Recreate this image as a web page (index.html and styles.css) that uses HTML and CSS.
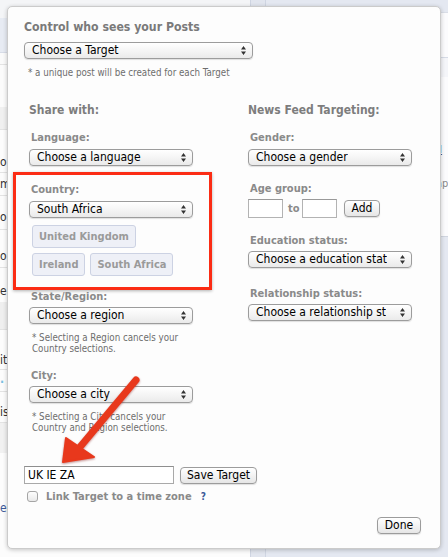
FILE: index.html
```html
<!DOCTYPE html>
<html>
<head>
<meta charset="utf-8">
<link rel="stylesheet" href="styles.css">
</head>
<body>
<div class="bg">
  <div class="bg-left">
    <div class="bgr r1"></div>
    <div class="bgr r2"></div>
    <div class="bgr r3"></div>
    <div class="bgr r4"></div>
    <div class="bgr r5"></div>
    <div class="bgr r6"><span>o</span></div>
    <div class="bgr r7"><span>m</span></div>
    <div class="bgr r8"><span>o</span></div>
    <div class="bgr r9"><span>o</span></div>
    <div class="bgr r10"><span>er</span></div>
    <div class="bgr r11"></div>
    <div class="bgr r12"><span>it</span></div>
    <div class="bgr r13"><span class="dot">·</span></div>
    <div class="bgr r14"><span>is</span></div>
    <div class="bgr r15"></div>
    <div class="bgr r16"><span class="lnk">e</span></div>
  </div>
  <div class="bg-gap"></div>
  <div class="bg-right">
    <div class="edge">
      <div class="edge-head"></div>
      <div class="edge-band"></div>
      <div class="edge-link">:l</div>
      <div class="edge-txt">ap</div>
    </div>
  </div>
</div>

<div class="modal">
  <h1 class="title">Control who sees your Posts</h1>
  <div class="select sel-target"><span>Choose a Target</span><svg class="arr" width="5" height="9" viewBox="0 0 5 9"><path d="M0 3.5L2.5 0L5 3.5Z M0 5.5L2.5 9L5 5.5Z" fill="#333"/></svg></div>
  <p class="note note-top">* a unique post will be created for each Target</p>

  <div class="cols">
    <div class="col col-left">
      <h2 class="head">Share with:</h2>
      <label class="lbl lbl-first">Language:</label>
      <div class="select"><span>Choose a language</span><svg class="arr" width="5" height="9" viewBox="0 0 5 9"><path d="M0 3.5L2.5 0L5 3.5Z M0 5.5L2.5 9L5 5.5Z" fill="#333"/></svg></div>

      <div class="redbox">
        <label class="lbl lbl-in">Country:</label>
        <div class="select"><span>South Africa</span><svg class="arr" width="5" height="9" viewBox="0 0 5 9"><path d="M0 3.5L2.5 0L5 3.5Z M0 5.5L2.5 9L5 5.5Z" fill="#333"/></svg></div>
        <div class="chips">
          <span class="chip">United Kingdom</span>
        </div>
        <div class="chips chips2">
          <span class="chip">Ireland</span>
          <span class="chip">South Africa</span>
        </div>
      </div>

      <label class="lbl lbl-state">State/Region:</label>
      <div class="select sel-tight"><span>Choose a region</span><svg class="arr" width="5" height="9" viewBox="0 0 5 9"><path d="M0 3.5L2.5 0L5 3.5Z M0 5.5L2.5 9L5 5.5Z" fill="#333"/></svg></div>
      <p class="note note-col">* Selecting a Region cancels your<br>Country selections.</p>

      <label class="lbl lbl-city">City:</label>
      <div class="select sel-tight"><span>Choose a city</span><svg class="arr" width="5" height="9" viewBox="0 0 5 9"><path d="M0 3.5L2.5 0L5 3.5Z M0 5.5L2.5 9L5 5.5Z" fill="#333"/></svg></div>
      <p class="note note-col">* Selecting a City cancels your<br>Country and Region selections.</p>
    </div>

    <div class="col col-right">
      <h2 class="head">News Feed Targeting:</h2>
      <label class="lbl lbl-first">Gender:</label>
      <div class="select"><span>Choose a gender</span><svg class="arr" width="5" height="9" viewBox="0 0 5 9"><path d="M0 3.5L2.5 0L5 3.5Z M0 5.5L2.5 9L5 5.5Z" fill="#333"/></svg></div>

      <label class="lbl lbl-r">Age group:</label>
      <div class="age">
        <span class="box"></span>
        <span class="to">to</span>
        <span class="box"></span>
        <span class="btn btn-add">Add</span>
      </div>

      <label class="lbl lbl-r">Education status:</label>
      <div class="select sel-tight"><span>Choose a education stat</span><svg class="arr" width="5" height="9" viewBox="0 0 5 9"><path d="M0 3.5L2.5 0L5 3.5Z M0 5.5L2.5 9L5 5.5Z" fill="#333"/></svg></div>

      <label class="lbl lbl-rel">Relationship status:</label>
      <div class="select sel-tight"><span>Choose a relationship st</span><svg class="arr" width="5" height="9" viewBox="0 0 5 9"><path d="M0 3.5L2.5 0L5 3.5Z M0 5.5L2.5 9L5 5.5Z" fill="#333"/></svg></div>
    </div>
  </div>

  <div class="save-row">
    <span class="text-input">UK IE ZA</span>
    <span class="btn btn-save">Save Target</span>
  </div>
  <div class="check-row">
    <span class="checkbox"></span>
    <span class="check-lbl">Link Target to a time zone</span>
    <span class="help">?</span>
  </div>
  <span class="btn btn-done">Done</span>
</div>

<svg class="arrow" width="448" height="557" viewBox="0 0 448 557">
  <g class="arrow-g">
    <line x1="136" y1="380" x2="80" y2="447" stroke="#e8381c" stroke-width="7" stroke-linecap="round"/>
    <polygon points="63,462 66,438 94,457" fill="#e8381c" stroke="#e8381c" stroke-width="2" stroke-linejoin="round"/>
  </g>
</svg>
</body>
</html>
```
FILE: styles.css
```css
* { box-sizing: border-box; }
html, body { margin: 0; padding: 0; }
body {
  width: 448px;
  height: 557px;
  overflow: hidden;
  position: relative;
  background: #e4e8f1;
  font-family: "DejaVu Sans Condensed", "DejaVu Sans", sans-serif;
}

/* ---------- faded background page ---------- */
.bg { display: flex; height: 557px; }
.bg-left {
  width: 251px;
  background: #f9f9f9;
  border-right: 1px solid #cfd5e2;
  display: flex;
  flex-direction: column;
}
.bgr {
  display: flex;
  align-items: flex-end;
  font-size: 12px;
  color: #333;
  border-bottom: 1px solid #e3e3e3;
}
.bgr span { line-height: 14px; }
.r1 { height: 18px; background: #f4f5f7; border-bottom: none; }
.r2 { height: 35px; background: #e7ebf3; border-bottom-color: #d7dce7; }
.r3 { height: 12px; background: #fafafa; }
.r4 { height: 42px; background: #fbfbfb; border-bottom: none; }
.r5 { height: 23px; background: #f0f0f0; }
.r6 { height: 43px; padding-bottom: 3px; background: #fcfcfc; }
.r7 { height: 23px; padding-bottom: 4px; background: #fcfcfc; }
.r8 { height: 34px; padding-bottom: 5px; background: #fcfcfc; }
.r9 { height: 38px; padding-bottom: 4px; background: #fcfcfc; }
.r10 { height: 34px; padding-bottom: 4px; background: #fcfcfc; border-bottom: none; }
.r11 { height: 28px; background: #efefef; }
.r12 { height: 40px; padding-bottom: 2px; background: #fcfcfc; }
.r13 { height: 22px; padding-bottom: 2px; background: #fcfcfc; color: #79c0e0; }
.r14 { height: 31px; padding-bottom: 3px; background: #fcfcfc; }
.r15 { height: 30px; background: #f1f1f1; border-bottom: none; }
.r16 { flex: 1; align-items: flex-start; padding-top: 48px; background: #fcfcfc; border-bottom: none; }
.lnk { color: #3b5998; }
.dot { font-weight: bold; }
.bg-gap {
  width: 15px;
  background: #e1e5ee;
  border-right: 1px solid #cfd5e2;
}
.bg-right {
  flex: 1;
  display: flex;
  justify-content: flex-end;
  align-items: flex-start;
}
.edge {
  width: 12px;
  margin-top: 12px;
  height: 225px;
  background: #fbfbfd;
  border-top: 1px solid #d9dde6;
  border-bottom: 1px solid #d0d5df;
  display: flex;
  flex-direction: column;
  font-size: 11px;
}
.edge-head { height: 44px; }
.edge-band { height: 20px; border-top: 1px solid #d6dbe6; background: #f4f5f9; }
.edge-link { margin-top: 66px; padding-left: 0; color: #3b5998; text-decoration: underline; line-height: 14px; }
.edge-txt { margin-top: 20px; color: #888; line-height: 14px; }

/* ---------- modal ---------- */
.modal {
  position: absolute;
  left: 7px;
  top: 6px;
  width: 434px;
  height: 543px;
  background: #fdfdfd;
  border: 1px solid #cbcbcb;
  border-radius: 5px;
  box-shadow: 0 1px 4px rgba(0, 0, 0, 0.22);
  padding: 12px 19px 0 16px;
  display: flex;
  flex-direction: column;
  align-items: flex-start;
}
.title {
  margin: 0;
  font-size: 12.2px;
  line-height: 16px;
  font-weight: bold;
  color: #7a7a7a;
}
.select {
  position: relative;
  width: 164px;
  height: 17px;
  margin-top: 4px;
  border: 1px solid #9c9c9c;
  border-radius: 4px;
  background: linear-gradient(#ffffff, #f3f3f3 60%, #eaeaea);
  box-shadow: 0 1px 1px rgba(0, 0, 0, 0.12);
  display: flex;
  align-items: center;
  justify-content: space-between;
  padding: 0 6px 0 7px;
  font-size: 12px;
  color: #000;
  line-height: 15px;
  white-space: nowrap;
  overflow: hidden;
}
.select span { overflow: hidden; }
.arr { flex: none; }
.sel-target { width: 229px; margin-top: 7px; }
.sel-tight { margin-top: 3px; }
.note {
  margin: 0;
  font-size: 9.7px;
  line-height: 11px;
  color: #6d6d6d;
}
.note-top { margin-top: 8px; padding-left: 4px; line-height: 12px; }
.note-col { margin-top: 8px; padding-left: 3px; }

.cols {
  display: flex;
  gap: 55px;
  margin-top: 24px;
  margin-left: 5px;
}
.col { display: flex; flex-direction: column; align-items: flex-start; width: 164px; }
.head {
  margin: 0;
  font-size: 12px;
  line-height: 15px;
  font-weight: bold;
  color: #7d7d7d;
  white-space: nowrap;
}
.lbl {
  display: block;
  font-size: 11px;
  line-height: 14px;
  font-weight: bold;
  color: #8a8a8a;
  padding-left: 2px;
  white-space: nowrap;
}
.lbl-first { margin-top: 13px; }
.lbl-in { margin-top: 4px; }
.lbl-state { margin-top: 0; }
.lbl-city { margin-top: 15px; }
.lbl-r { margin-top: 16px; }
.lbl-rel { margin-top: 19px; }

.redbox {
  margin-top: 6px;
  margin-left: -16px;
  width: 199px;
  height: 118px;
  border: 3px solid #fb2c14;
  box-shadow: 0 1px 3px rgba(0, 0, 0, 0.3);
  padding: 4px 0 0 13px;
  display: flex;
  flex-direction: column;
  align-items: flex-start;
}
.chips { display: flex; gap: 5px; margin-top: 7px; padding-left: 3px; }
.chips2 { margin-top: 5px; }
.chip {
  height: 23px;
  padding: 0 6px 0 6px;
  border: 1px solid #ccd2e3;
  border-radius: 3px;
  background: #eef0f7;
  color: #9a9a9a;
  font-size: 11px;
  font-weight: bold;
  line-height: 21px;
  white-space: nowrap;
}

.age { display: flex; align-items: center; margin-top: 3px; }
.box {
  width: 35px;
  height: 19px;
  border: 1px solid #b3b3b3;
  border-top-color: #999;
  background: #fff;
}
.to {
  font-size: 11px;
  font-weight: bold;
  color: #8a8a8a;
  margin: 0 4px 0 5px;
  width: 10px;
}
.btn {
  height: 17px;
  border: 1px solid #9c9c9c;
  border-radius: 4px;
  background: linear-gradient(#ffffff, #f0f0f0 60%, #e6e6e6);
  box-shadow: 0 1px 1px rgba(0, 0, 0, 0.12);
  font-size: 12px;
  line-height: 15px;
  color: #000;
  text-align: center;
  white-space: nowrap;
}
.btn-add { width: 36px; margin-left: 7px; }

.save-row { display: flex; align-items: flex-start; margin-top: 33px; }
.text-input {
  width: 150px;
  height: 18px;
  border: 1px solid #a9a9a9;
  border-top-color: #8e8e8e;
  background: #fff;
  font-size: 12px;
  line-height: 16px;
  padding-left: 3px;
  color: #000;
}
.btn-save { width: 77px; margin-left: 6px; margin-top: 1px; }
.check-row { display: flex; align-items: center; margin-top: 5px; height: 14px; }
.checkbox {
  width: 11px;
  height: 11px;
  margin-left: 3px;
  border: 1px solid #a5a5a5;
  border-radius: 3px;
  background: linear-gradient(#fdfdfd, #e9e9e9);
}
.check-lbl {
  margin-left: 8px;
  font-size: 11px;
  font-weight: bold;
  color: #8a8a8a;
  white-space: nowrap;
}
.help {
  margin-left: 9px;
  font-size: 10px;
  font-weight: bold;
  color: #3b5998;
}
.btn-done { align-self: flex-end; width: 44px; margin-top: 14px; margin-right: 0; }

/* ---------- annotation arrow ---------- */
.arrow {
  position: absolute;
  left: 0;
  top: 0;
  pointer-events: none;
}
.arrow-g { filter: drop-shadow(0 1px 1px rgba(120, 0, 0, 0.45)); }
```
